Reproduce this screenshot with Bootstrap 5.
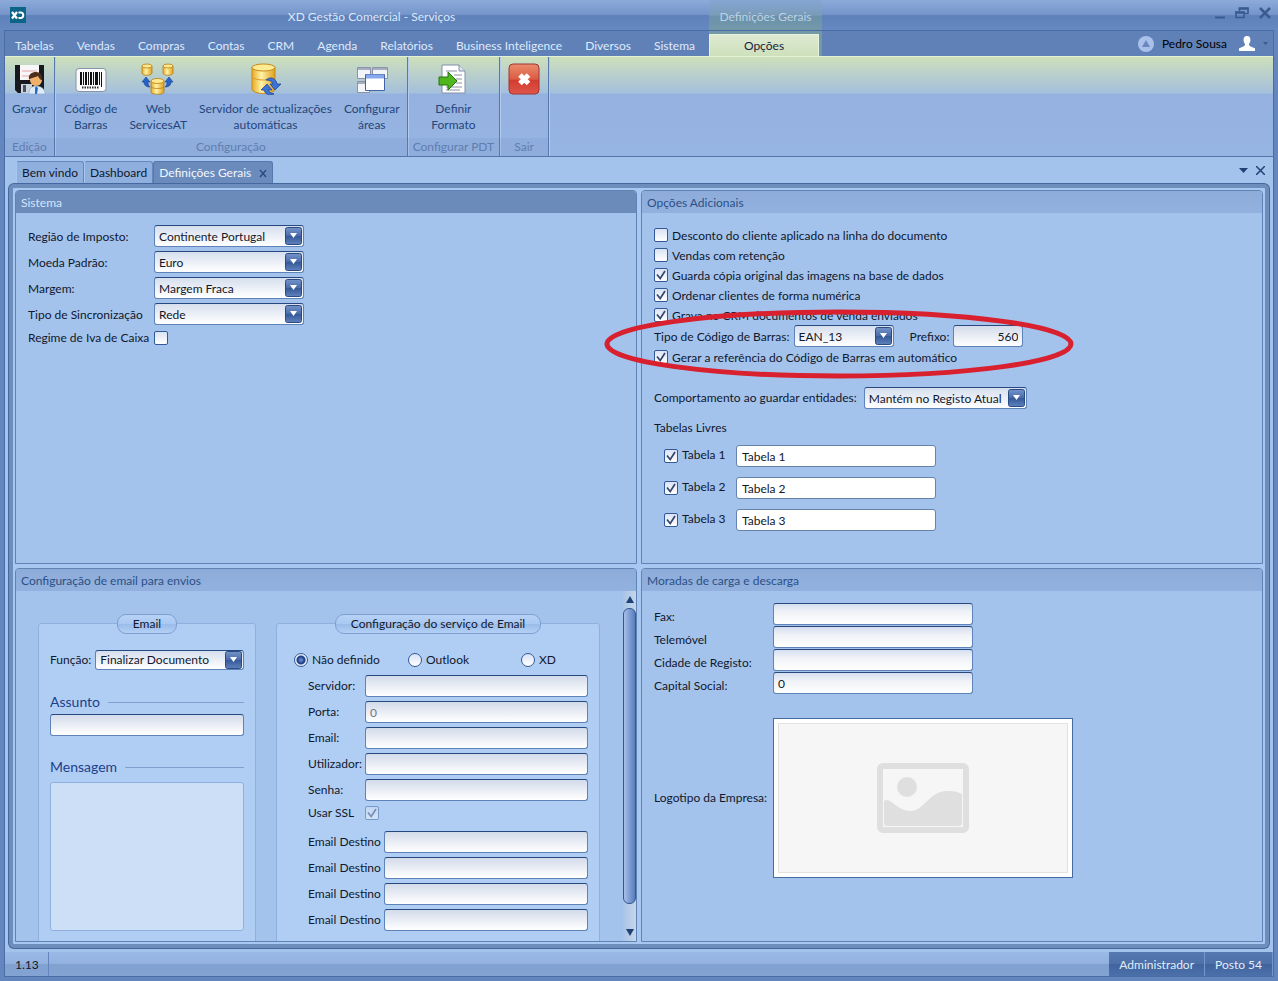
<!DOCTYPE html>
<html lang="pt">
<head>
<meta charset="utf-8">
<meta name="viewport" content="width=device-width, initial-scale=1">
<title>XD Gestão Comercial - Serviços</title>
<link href="https://cdn.jsdelivr.net/npm/bootstrap@5.3.0/dist/css/bootstrap.min.css" rel="stylesheet">
<style>
  :root { --line: #5377ad; --ink: #10182c; --navy: #1f4173; }
  body { font: 12px/16px Lato, "Open Sans", sans-serif; color: var(--ink); background: #6386be; min-height: 100vh; }
  button { color: inherit; }
  a { color: inherit; text-decoration: none; }

  /* Title bar and menu */
  .titlebar { height: 30px; background: linear-gradient(#8cabda, #7595cb 48%, #5f81b9 52%, #6789c2); color: #dbe8fb; }
  .lead-col { flex: 0 0 709px; }
  .context-col { flex: 0 0 113px; background: linear-gradient(#86a6d3, #7a9cb9 50%, #6b91ac 55%, #7399a8); color: #bcd2e6; padding-top: 4px; }
  .title-text { padding-top: 4px; }
  .win-btn { border: 0; background: none; padding: 0; line-height: 0; color: #3a5b90; }
  .win-btns { padding: 0 6px 4px 0; }
  .app { margin: 0 4px 4px; border: 1px solid #4b6da5; background: #a4c3ec; }
  .menubar { height: 25px; background: #6081b8; color: #dfeafb; }
  .menubar .lead-col { flex-basis: 704px; padding: 0 14px 0 10px; }
  .menubar .menu-link { padding: 7px 0 2px; }
  .menubar .context-col { background: #7399a8; padding-top: 3px; }
  .context-tab { width: 110px; height: 22px; padding-top: 3px; background: linear-gradient(#deead2, #cde0bb); border: 1px solid #e9f3dc; border-bottom: 0; color: #16243f; }

  /* Ribbon */
  .ribbon { border-top: 1px solid #e4f0d3; border-bottom: 1px solid var(--line); background: linear-gradient(#cde0bb, #b9cfcc 18px, #a4c0dc 36px, #94b1df 37px, #97b5e2); color: #24467c; min-height: 101px; }
  .ribbon-group { border-right: 1px solid #5578ad; box-shadow: 1px 0 0 #b4cbee; min-width: 49px; }
  .ribbon-group footer { height: 18px; padding: 1px 5px 0; background: rgba(110,145,205,.2); color: #5f7eae; white-space: nowrap; }
  .ribbon-group.first-group { min-width: 50px; }
  .ribbon-tools { padding: 0 1px 0 3px; }
  .ribbon-btn { border: 0; background: none; padding: 6px 6px 0; }
  .ribbon-btn svg { display: block; margin: 0 auto 6px; }

  /* Document tabs */
  .doc-tabs { height: 27px; padding: 4px 8px 0 11px; color: #10182c; }
  .doc-tab { height: 23px; padding: 3px 5px 0; background: #8fb0df; border: 1px solid #6688bb; border-bottom: 0; border-left-color: #a9c6ee; border-radius: 3px 3px 0 0; }
  .doc-tab.current { background: #6a8bbb; border-color: #5578ad; color: #f2f7ff; }
  .doc-frame { margin: 0 4px 4px; padding: 2px; border: 4px solid #6d8ebd; box-shadow: 0 0 0 1px #45689f; border-radius: 5px; background: #a9c8f1; display: grid; grid-template: minmax(0, 1fr) minmax(0, 1fr) / 622px minmax(0, 1fr); gap: 4px; }
  .pane { border: 1px solid #5f83b5; border-radius: 4px 4px 0 0; background: #a4c3ec; min-width: 0; }
  .pane > h2 { margin: 0; height: 22px; padding: 4px 5px 0; font-size: 12px; line-height: 16px; font-weight: 400; background: linear-gradient(#8dacda, #92b1df); color: #2c5085; border-radius: 3px 3px 0 0; }
  .pane.focused > h2 { background: #6b8bba; color: #d5e5fa; }
  .pane-body { padding: 12px; }

  /* Form controls */
  .field, .picker { height: 22px; padding: 2px 4px; border: 1px solid #5e83b8; border-top-color: #27497f; border-radius: 3px; background: linear-gradient(#d3dbea, #fff); color: #10182c; font-size: 12px; line-height: 16px; min-width: 0; width: 100%; }
  .field.flat { background: #fff; border-color: #6583ad; padding-left: 5px; }
  .field:disabled { color: #777; }
  .field.light { background: linear-gradient(#d5def0, #f0f2f7 40%, #fff); }
  .picker { appearance: none; padding: 3px 20px 1px 4px; background: url("data:image/svg+xml,%3Csvg xmlns='http://www.w3.org/2000/svg' width='17' height='18'%3E%3Cdefs%3E%3ClinearGradient id='g' x2='0' y2='1'%3E%3Cstop stop-color='%237594c8'/%3E%3Cstop offset='.48' stop-color='%234a6cab'/%3E%3Cstop offset='.5' stop-color='%23345896'/%3E%3Cstop offset='1' stop-color='%235f82bd'/%3E%3C/linearGradient%3E%3C/defs%3E%3Crect x='.5' y='.5' width='16' height='17' rx='2' fill='url(%23g)' stroke='%23294b83'/%3E%3Cpath d='M5 6h7l-3.500 5z' fill='%23fff'/%3E%3C/svg%3E") right 1px center no-repeat, linear-gradient(#d6dfee, #fff); }
  .picker.low { height: 20px; padding-top: 1px; }
  .tick, .dot { appearance: none; flex: none; width: 14px; height: 14px; margin: 0; border: 1px solid #335a98; border-radius: 2px; background: linear-gradient(#d9e3f4, #fff); vertical-align: middle; }
  .tick:checked { background: url("data:image/svg+xml,%3Csvg xmlns='http://www.w3.org/2000/svg' width='12' height='12'%3E%3Cpath d='M2 5.500l3.200 4L10 2' fill='none' stroke='%2335476f' stroke-width='1.700'/%3E%3C/svg%3E") center no-repeat, linear-gradient(#d9e3f4, #fff); }
  .tick:disabled { opacity: .45; }
  .dot { border-radius: 50%; }
  .dot:checked { background: radial-gradient(circle at center, #6084cb 1px, #27488e 3px, #1f3e80 4px, #e6eefb 5px); }
  .choice { display: flex; align-items: center; gap: 4px; height: 20px; }
  .nudge { padding-top: 1px; }

  .system-grid { display: grid; grid-template-columns: 126px 150px; row-gap: 4px; align-items: center; }
  .system-grid label, .barcode-row label { padding-top: 1px; }
  .barcode-row { height: 22px; position: relative; }
  .barcode-type { min-width: 100px; }
  .prefix { width: 70px; }
  .marker { position: absolute; left: -50px; top: -18px; pointer-events: none; }
  .entity { width: 163px; margin-left: 7px; }
  .free-title { padding: 11px 0 4px; }
  .free-table { display: grid; grid-template-columns: 14px 58px 200px; align-items: center; margin-left: 10px; height: 32px; }
  .free-table label { padding: 0 0 3px 4px; }

  /* E-mail pane */
  .scroll-area { flex: 1 1 0; min-height: 0; overflow: hidden; }
  .mail-groups { display: grid; grid-template-columns: 218px 324px; gap: 20px; padding: 32px 0 0 22px; }
  .group { border: 1px solid #8fb0df; border-radius: 3px; background: #b0cef3; padding: 0 11px; height: 360px; }
  .pill { margin: -10px auto 0; padding: 1px 15px; height: 20px; border: 1px solid #7f9fd2; border-radius: 9px; background: linear-gradient(#b7d2f6, #a9c8f2 50%, #9bbcea 52%, #b3d0f5); }
  .func-row { margin-top: 16px; }
  .rule-title { display: flex; align-items: center; gap: 8px; color: #1d3f8b; font-size: 14px; line-height: 18px; }
  .rule-title::after { content: ""; flex: 1; height: 1px; background: #7f9fd2; }
  .subject { margin: 23px 0 3px; }
  .body-title { margin: 22px 0 6px; }
  .message { height: 149px; width: 100%; border: 1px solid #8fb0de; border-radius: 3px; background: #cddff7; resize: none; display: block; }
  .radio-row { display: grid; grid-template-columns: 114px 113px 1fr; margin: 16px 0 3px 6px; }
  .mail-row { display: grid; grid-template-columns: 57px 1fr; align-items: center; height: 26px; margin-left: 20px; }
  .mail-row.wide { grid-template-columns: 76px 1fr; }
  .mail-row.ssl { height: 20px; margin-bottom: 6px; }
  .scroll-rail { width: 13px; background: linear-gradient(90deg, #a9c4e8, #c5d6ea); }
  .scroll-thumb { height: 296px; border: 1px solid #34578f; border-radius: 6px; background: linear-gradient(90deg, #a8c1ea, #7d9dd3 50%, #5a7dbb); }

  .address-row { display: grid; grid-template-columns: 119px 200px; height: 23px; }
  .address-row label { padding-top: 6px; }
  .logo-row { margin-top: 23px; }
  .logo-label { flex: 0 0 119px; }
  .logo-box { width: 300px; height: 160px; padding: 4px; background: #fff; border: 1px solid #466b9f; }
  .logo-box > div { height: 100%; background: #f6f6f6; border: 1px solid #e1e3dc; }

  /* Status bar */
  .statusbar { height: 24px; background: linear-gradient(#9bb9e6, #92b1df 50%, #81a2d0 52%, #83a4d2); }
  .statusbar > span { padding: 5px 10px 0; }
  .status-cell { background: linear-gradient(#5779b1, #4d70a9 50%, #41649e 52%, #4c70aa); color: #e3edfb; border-right: 1px solid #7697cd; text-align: center; }
  .version { width: 44px; border-right: 1px solid #6485bb; }
</style>
</head>
<body class="d-flex flex-column">

<header class="titlebar d-flex">
  <div class="lead-col d-flex align-items-center">
    <svg class="ms-2 me-2" width="18" height="17" viewBox="0 0 18 17"><rect x="2" width="16" height="16" fill="#0d6489"/><path d="M4 5l5 6.500M9 5l-5 6.500" stroke="#fff" stroke-width="2.200"/><path d="M10.500 5.500h2.500a2.800 2.800 0 0 1 0 5.500H10.500" fill="none" stroke="#fff" stroke-width="2"/></svg>
    <div class="title-text flex-fill text-center">XD Gestão Comercial - Serviços</div>
  </div>
  <div class="context-col d-flex align-items-center justify-content-center">Definições Gerais</div>
  <div class="win-btns d-flex ms-auto align-items-center gap-2">
    <button class="win-btn" type="button" aria-label="Minimizar"><svg width="12" height="14"><path d="M1 11.500h10" stroke="currentColor" stroke-width="2"/></svg></button>
    <button class="win-btn" type="button" aria-label="Restaurar"><svg width="16" height="14"><path d="M5.500 5V2.500h8.500v5h-4M2 6.500h8v5H2z" fill="none" stroke="currentColor" stroke-width="1.600"/><path d="M1.200 6.500h9.600M4.700 2.500h10" stroke="currentColor" stroke-width="2.600"/></svg></button>
    <button class="win-btn" type="button" aria-label="Fechar"><svg width="14" height="14"><path d="M2 2l10 10M12 2L2 12" stroke="currentColor" stroke-width="2.500"/></svg></button>
  </div>
</header>

<div class="app d-flex flex-column flex-fill">
  <nav class="menubar d-flex">
    <div class="lead-col d-flex justify-content-between">
      <a class="menu-link" href="#">Tabelas</a><a class="menu-link" href="#">Vendas</a><a class="menu-link" href="#">Compras</a><a class="menu-link" href="#">Contas</a><a class="menu-link" href="#">CRM</a><a class="menu-link" href="#">Agenda</a><a class="menu-link" href="#">Relatórios</a><a class="menu-link" href="#">Business Inteligence</a><a class="menu-link" href="#">Diversos</a><a class="menu-link" href="#">Sistema</a>
    </div>
    <div class="context-col"><a class="context-tab d-block text-center" href="#">Opções</a></div>
    <div class="d-flex align-items-center ms-auto pe-1 gap-2 text-black">
      <svg width="16" height="16"><circle cx="8" cy="8" r="8" fill="#a9c1ea"/><path d="M8 4l4 7H4z" fill="#6d86bd"/></svg>
      <span>Pedro Sousa</span>
      <svg class="ms-1" width="16" height="16"><path d="M8 0c2.700 0 3.600 1.800 3.400 4.500-.1 1.800-1 2.600-1.400 3.800 0 2.200 2 2.400 6 3.900V15H0v-2.800c4-1.500 6-1.700 6-3.900-.4-1.200-1.300-2-1.400-3.800C4.400 1.800 5.300 0 8 0z" fill="#fff"/></svg>
      <svg width="6" height="4"><path d="M0 0h5L2.500 3z" fill="#3a5b90"/></svg>
    </div>
  </nav>

  <section class="ribbon d-flex">
    <div class="ribbon-group first-group d-flex flex-column text-center">
      <div class="flex-fill d-flex align-items-start justify-content-center">
        <button class="ribbon-btn" type="button">
          <svg width="32" height="32" viewBox="0 0 32 32"><path d="M1 2h29v28H4l-3-3z" fill="#17191f"/><path d="M6 2h19v15H6z" fill="#f7f7fa"/><path d="M8 8h15M8 13h9" stroke="#e6a1a1"/><path d="M7 21h11v9H7z" fill="#ccd3dd"/><path d="M9 22h3v7H9z" fill="#485063"/><path d="M15 31c0-6 3-8 7-8s9 2 9 8z" fill="#dcebf8" stroke="#8ea6c4" stroke-width=".6"/><path d="M22 23l2 2-1 6h-2v-6z" fill="#2b6bc0"/><circle cx="22" cy="17" r="6" fill="#f0b26a"/><path d="M15 17c-1-6 3-8 7-8s7 3 6 8c-2 0-3-2-4-4-3 2-7 1-9 4z" fill="#4f2d1b"/></svg>Gravar</button>
      </div>
      <footer>Edição</footer>
    </div>
    <div class="ribbon-group d-flex flex-column text-center">
      <div class="ribbon-tools flex-fill d-flex align-items-start">
        <button class="ribbon-btn" type="button">
          <svg width="32" height="32" viewBox="0 0 32 32"><rect x="1" y="5.500" width="30" height="23" rx="3" fill="#fafafa" stroke="#8693ac"/><path d="M5 9h2v13H5zM8 9h1v13H8zM10 9h2v13h-2zM13 9h1v13h-1zM15 9h2v13h-2zM18 9h1v13h-1zM20 9h3v13h-3zM24 9h1v13h-1zM26 9h1v15h-1z" fill="#111"/><path d="M7 24.500h17" stroke="#333" stroke-width="2" stroke-dasharray="1.500 1"/></svg>Código de<br>Barras</button>
        <button class="ribbon-btn" type="button">
          <svg width="34" height="32" viewBox="0 0 34 32"><defs><linearGradient id="gold"><stop stop-color="#e7aa24"/><stop offset=".4" stop-color="#fff3a6"/><stop offset="1" stop-color="#e0a01c"/></linearGradient></defs><g fill="url(#gold)" stroke="#b87c17" stroke-width=".8"><path d="M1 3v7c0 3 10 3 10 0V3z"/><ellipse cx="6" cy="3" rx="5" ry="2" fill="#ffe98c"/><path d="M22 3v7c0 3 10 3 10 0V3z"/><ellipse cx="27" cy="3" rx="5" ry="2" fill="#ffe98c"/><path d="M10 18v11c0 3 13 3 13 0V18z"/><ellipse cx="16.500" cy="18" rx="6.500" ry="2.500" fill="#ffe98c"/><path d="M10 24c2 2 11 2 13 0" fill="none"/></g><path d="M5 14l4 5H7c0 3 1 4 2 5-4 0-6-2-6-5H1zM28 14l4 5h-2c0 3-2 5-6 5 1-1 2-2 2-5h-2z" fill="#2763c8" stroke="#164293" stroke-width=".6"/></svg>Web<br>ServicesAT</button>
        <button class="ribbon-btn" type="button">
          <svg width="32" height="32" viewBox="0 0 32 32"><path d="M2 4v22c0 6 23 6 23 0V4z" fill="url(#gold)" stroke="#c58a1d"/><ellipse cx="13.500" cy="4.500" rx="11.500" ry="3.500" fill="#ffeb94" stroke="#c58a1d"/><path d="M2 14c3 4 20 4 23 0" fill="none" stroke="#d99c25"/><path d="M16 17c4-4 10-2 11 4h4l-6 6-5-6h3c-1-3-4-4-7-4zM24 31c-5 2-9 0-10-4h-3l6-6 5 6h-4c1 2 3 3 6 4z" fill="#3b73d6" stroke="#1f4797" stroke-width=".8"/></svg>Servidor de actualizações<br>automáticas</button>
        <button class="ribbon-btn" type="button">
          <svg width="32" height="32" viewBox="0 0 32 32"><g fill="#f3f4f8" stroke="#8b93a8"><path d="M1.500 4.500h13v11h-13zM16.500 4.500h15v11h-15zM1.500 18.500h12v11h-12z"/><path d="M2 6h12M17 6h14M2 20h11" stroke="#a5adc0" stroke-width="2"/><path d="M9.500 11.500h19v16h-19z" stroke="#4265a7" fill="#fff"/></g><path d="M10 13.500h18" stroke="#86a8ef" stroke-width="4"/></svg>Configurar<br>áreas</button>
      </div>
      <footer>Configuração</footer>
    </div>
    <div class="ribbon-group d-flex flex-column text-center">
      <div class="flex-fill">
        <button class="ribbon-btn" type="button">
          <svg width="32" height="32" viewBox="0 0 32 32"><path d="M5 2h17l6 6v22H5z" fill="#fff" stroke="#8190a8"/><path d="M22 2v6h6" fill="#dce3ee" stroke="#8190a8"/><path d="M9 8h11M17 12h8M19 16h6M19 20h6M9 24h16M9 27h14" stroke="#8a8fa5"/><path d="M2 14h9V9l9 9-9 9v-5H2z" fill="#4fb61d" stroke="#26730e"/></svg>Definir<br>Formato</button>
      </div>
      <footer>Configurar PDT</footer>
    </div>
    <div class="ribbon-group d-flex flex-column text-center">
      <div class="flex-fill">
        <button class="ribbon-btn" type="button" aria-label="Sair">
          <svg width="32" height="32" viewBox="0 0 32 32"><defs><linearGradient id="red" x2="0" y2="1"><stop stop-color="#e98d6c"/><stop offset=".5" stop-color="#dc5b43"/><stop offset=".55" stop-color="#d43c30"/><stop offset="1" stop-color="#e0554a"/></linearGradient></defs><rect x="1" y="1" width="30" height="30" rx="4" fill="url(#red)" stroke="#a23535"/><path d="M12 12l8.500 8.500M20.500 12L12 20.500" stroke="#fff" stroke-width="5"/></svg></button>
      </div>
      <footer>Sair</footer>
    </div>
  </section>

  <div class="doc-tabs d-flex">
    <a class="doc-tab" href="#">Bem vindo</a>
    <a class="doc-tab" href="#">Dashboard</a>
    <a class="doc-tab current d-flex gap-2" href="#">Definições Gerais <svg class="mt-1" width="8" height="9"><path d="M1 1l6 7M7 1L1 8" stroke="#27497f" stroke-width="1.300"/></svg></a>
    <div class="ms-auto d-flex align-items-center gap-2 pb-1">
      <svg width="9" height="5"><path d="M0 0h9L4.500 5z" fill="#1f4173"/></svg>
      <svg width="9" height="9"><path d="M0 0l9 9M9 0L0 9" stroke="#1f4173" stroke-width="1.500"/></svg>
    </div>
  </div>

  <main class="doc-frame flex-fill">
    <section class="pane focused">
      <h2>Sistema</h2>
      <div class="pane-body system-grid">
        <label for="regiao">Região de Imposto:</label><select class="picker" id="regiao"><option>Continente Portugal</option></select>
        <label for="moeda">Moeda Padrão:</label><select class="picker" id="moeda"><option>Euro</option></select>
        <label for="margem">Margem:</label><select class="picker" id="margem"><option>Margem Fraca</option></select>
        <label for="sinc">Tipo de Sincronização</label><select class="picker" id="sinc"><option>Rede</option></select>
        <label for="iva">Regime de Iva de Caixa</label><input class="tick" type="checkbox" id="iva">
      </div>
    </section>

    <section class="pane">
      <h2>Opções Adicionais</h2>
      <div class="pane-body">
        <label class="choice"><input class="tick" type="checkbox"><span class="nudge">Desconto do cliente aplicado na linha do documento</span></label>
        <label class="choice"><input class="tick" type="checkbox"><span class="nudge">Vendas com retenção</span></label>
        <label class="choice"><input class="tick" type="checkbox" checked><span class="nudge">Guarda cópia original das imagens na base de dados</span></label>
        <label class="choice"><input class="tick" type="checkbox" checked><span class="nudge">Ordenar clientes de forma numérica</span></label>
        <label class="choice"><input class="tick" type="checkbox" checked><span class="nudge">Grava no CRM documentos de venda enviados</span></label>
        <div class="barcode-row d-flex align-items-center">
          <label for="codigo">Tipo de Código de Barras:</label>
          <select class="picker barcode-type w-auto ms-1" id="codigo"><option>EAN_13</option></select>
          <label class="ms-3" for="prefixo">Prefixo:</label>
          <input class="field prefix text-end ms-1" id="prefixo" value="560">
          <svg class="marker" width="470" height="74" viewBox="0 0 470 74"><ellipse cx="235" cy="37" rx="232" ry="32" fill="none" stroke="#d8202e" stroke-width="5"/></svg>
        </div>
        <label class="choice"><input class="tick" type="checkbox" checked><span class="nudge">Gerar a referência do Código de Barras em automático</span></label>
        <div class="d-flex align-items-center mt-3 pt-1">
          <label for="entidades">Comportamento ao guardar entidades:</label>
          <select class="picker entity" id="entidades"><option>Mantém no Registo Atual</option></select>
        </div>
        <div class="free-title">Tabelas Livres</div>
        <div class="free-table"><input class="tick" type="checkbox" id="t1" checked><label for="t1">Tabela 1</label><input class="field flat" aria-label="Tabela 1" value="Tabela 1"></div>
        <div class="free-table"><input class="tick" type="checkbox" id="t2" checked><label for="t2">Tabela 2</label><input class="field flat" aria-label="Tabela 2" value="Tabela 2"></div>
        <div class="free-table"><input class="tick" type="checkbox" id="t3" checked><label for="t3">Tabela 3</label><input class="field flat" aria-label="Tabela 3" value="Tabela 3"></div>
      </div>
    </section>

    <section class="pane d-flex flex-column">
      <h2>Configuração de email para envios</h2>
      <div class="scroll-area d-flex">
        <div class="mail-groups">
          <div class="group" role="group" aria-labelledby="g-email">
            <div class="d-flex"><div class="pill" id="g-email">Email</div></div>
            <div class="d-flex align-items-center func-row">
              <label for="funcao">Função:</label>
              <select class="picker low ms-1" id="funcao"><option>Finalizar Documento</option></select>
            </div>
            <label class="rule-title subject" for="assunto">Assunto</label>
            <input class="field" id="assunto">
            <label class="rule-title body-title" for="mensagem">Mensagem</label>
            <textarea class="message" id="mensagem"></textarea>
          </div>
          <div class="group" role="group" aria-labelledby="g-serv">
            <div class="d-flex"><div class="pill" id="g-serv">Configuração do serviço de Email</div></div>
            <div class="radio-row">
              <label class="choice"><input class="dot" type="radio" name="serv" checked>Não definido</label>
              <label class="choice"><input class="dot" type="radio" name="serv">Outlook</label>
              <label class="choice"><input class="dot" type="radio" name="serv">XD</label>
            </div>
            <div class="mail-row"><label for="servidor">Servidor:</label><input class="field" id="servidor"></div>
            <div class="mail-row"><label for="porta">Porta:</label><input class="field" id="porta" value="0" disabled></div>
            <div class="mail-row"><label for="email">Email:</label><input class="field" id="email"></div>
            <div class="mail-row"><label for="util">Utilizador:</label><input class="field" id="util"></div>
            <div class="mail-row"><label for="senha">Senha:</label><input class="field" id="senha" type="password"></div>
            <div class="mail-row ssl"><label for="ssl">Usar SSL</label><input class="tick" type="checkbox" id="ssl" checked disabled></div>
            <div class="mail-row wide"><label for="d1">Email Destino</label><input class="field" id="d1"></div>
            <div class="mail-row wide"><label for="d2">Email Destino</label><input class="field" id="d2"></div>
            <div class="mail-row wide"><label for="d3">Email Destino</label><input class="field" id="d3"></div>
            <div class="mail-row wide"><label for="d4">Email Destino</label><input class="field" id="d4"></div>
          </div>
        </div>
        <div class="scroll-rail ms-auto d-flex flex-column">
          <svg class="my-1 mx-auto flex-shrink-0" width="8" height="9"><path d="M4 1l4 7H0z" fill="#1f4173"/></svg>
          <div class="scroll-thumb"></div>
          <svg class="mt-auto mb-1 mx-auto flex-shrink-0" width="8" height="9"><path d="M4 8l4-7H0z" fill="#1f4173"/></svg>
        </div>
      </div>
    </section>

    <section class="pane">
      <h2>Moradas de carga e descarga</h2>
      <div class="pane-body">
        <div class="address-row"><label for="fax">Fax:</label><input class="field light" id="fax"></div>
        <div class="address-row"><label for="tel">Telemóvel</label><input class="field light" id="tel"></div>
        <div class="address-row"><label for="cidade">Cidade de Registo:</label><input class="field light" id="cidade"></div>
        <div class="address-row"><label for="capital">Capital Social:</label><input class="field light" id="capital" value="0"></div>
        <div class="d-flex align-items-center logo-row">
          <span class="logo-label">Logotipo da Empresa:</span>
          <div class="logo-box"><div class="d-flex align-items-center justify-content-center">
            <svg width="92" height="70" viewBox="0 0 92 70"><rect x="3" y="3" width="86" height="64" rx="3" fill="#f6f6f6" stroke="#dfdfdf" stroke-width="6"/><circle cx="30" cy="24" r="10" fill="#dfdfdf"/><path d="M7 38c6-5 13 10 26 10 15 0 18-20 38-20 7 0 10 1 14 3v29q0 3-3 3H10q-3 0-3-3z" fill="#dfdfdf"/></svg>
          </div></div>
        </div>
      </div>
    </section>
  </main>

  <footer class="statusbar d-flex">
    <span class="version">1.13</span>
    <span class="status-cell ms-auto">Administrador</span>
    <span class="status-cell">Posto 54</span>
  </footer>
</div>

<script src="https://cdn.jsdelivr.net/npm/bootstrap@5.3.0/dist/js/bootstrap.bundle.min.js"></script>
</body>
</html>
